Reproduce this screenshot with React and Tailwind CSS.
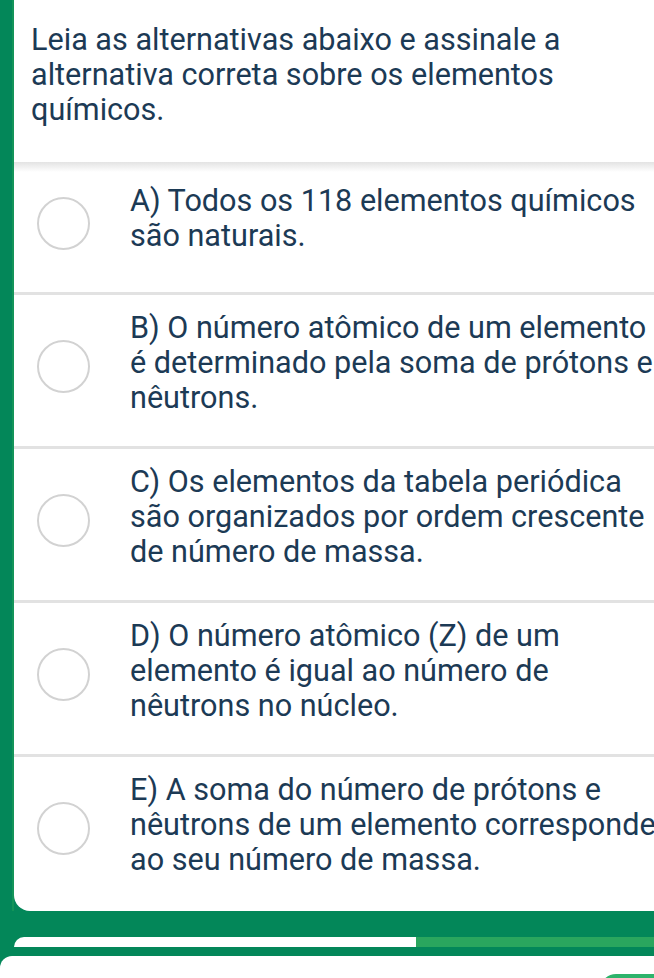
import React from 'react';

const question = [
  'Leia as alternativas abaixo e assinale a',
  'alternativa correta sobre os elementos',
  'químicos.',
];

// padding per row is hand-tuned against the screenshot
const options = [
  {
    id: 'a',
    lines: ['A) Todos os 118 elementos químicos', 'são naturais.'],
    rowClass: 'pt-[11px] pb-[39px]',
    circleClass: 'mt-[14px]',
  },
  {
    id: 'b',
    lines: ['B) O número atômico de um elemento', 'é determinado pela soma de prótons e', 'nêutrons.'],
    rowClass: 'pt-[15px] pb-[31px]',
    circleClass: 'mt-[30px]',
  },
  {
    id: 'c',
    lines: ['C) Os elementos da tabela periódica', 'são organizados por ordem crescente', 'de número de massa.'],
    rowClass: 'pt-[15px] pb-[31px]',
    circleClass: 'mt-[30px]',
  },
  {
    id: 'd',
    lines: ['D) O número atômico (Z) de um', 'elemento é igual ao número de', 'nêutrons no núcleo.'],
    rowClass: 'pt-[15px] pb-[31px]',
    circleClass: 'mt-[30px]',
  },
  {
    id: 'e',
    lines: ['E) A soma do número de prótons e', 'nêutrons de um elemento corresponde', 'ao seu número de massa.'],
    rowClass: 'pt-[15px] pb-[34px]',
    circleClass: 'mt-[30px]',
  },
];

const Lines = ({ lines }) => (
  <div className="whitespace-nowrap text-[30.6px] leading-[35px] text-[#1c3a55]">
    {lines.map((line) => (
      <div key={line}>{line}</div>
    ))}
  </div>
);

const OptionRow = ({ option, last }) => (
  <>
    <button type="button" className={`flex w-full items-start text-left ${option.rowClass}`}>
      <span className={`ml-[23px] h-[53px] w-[53px] shrink-0 rounded-full border-2 border-[#d2d2d2] bg-white ${option.circleClass}`} />
      <span className="ml-[40px]">
        <Lines lines={option.lines} />
      </span>
    </button>
    {!last && <div className="h-[3px] bg-[#e2e2e2]" />}
  </>
);

export default function App() {
  return (
    <div
      className="flex h-[978px] w-[654px] flex-col overflow-hidden bg-[#038759]"
      style={{ fontFamily: 'Roboto, "Noto Sans", sans-serif' }}
    >
      <div className="flex shrink-0">
        <div className="w-[12px] shrink-0 bg-[#038759]" />
        <div className="w-[2px] shrink-0 bg-[#139459]" />
        <div className="w-[700px] shrink-0 rounded-bl-[16px] bg-white">
          <div className="pl-[17px] pt-[22px] pb-[35px]">
            <Lines lines={question} />
          </div>
          <div className="h-[10px] bg-linear-to-b from-[#e3e3e3] to-white" />
          {options.map((option, index) => (
            <OptionRow key={option.id} option={option} last={index === options.length - 1} />
          ))}
        </div>
      </div>

      <div className="mt-[26px] flex h-[10px] shrink-0">
        <div className="ml-[14px] w-[402px] rounded-tl-[10px] bg-white" />
        <div className="flex-1 bg-[#2aa65e]" />
      </div>

      <div className="mt-[9px] flex min-h-0 flex-1 justify-end overflow-hidden rounded-tl-[12px] bg-white">
        <div className="mt-[18px] h-[30px] w-[54px] shrink-0 rounded-tl-[16px] bg-[#2db36b]" />
      </div>
    </div>
  );
}
